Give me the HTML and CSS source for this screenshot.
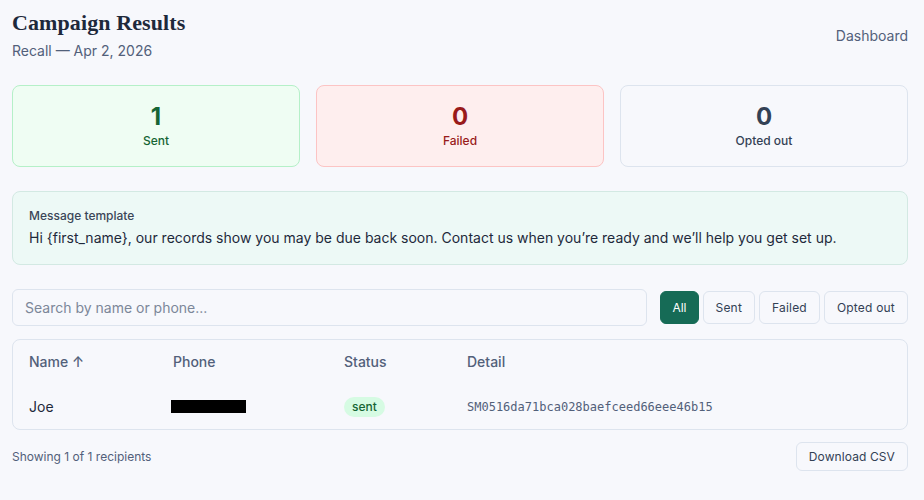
FILE: index.html
```html
<!DOCTYPE html>
<html lang="en">
<head>
<meta charset="utf-8">
<title>Campaign Results</title>
<link rel="stylesheet" href="styles.css">
</head>
<body>
<main class="page">
  <header class="header">
    <div class="titles">
      <h1 class="title">Campaign Results</h1>
      <p class="subtitle">Recall — Apr 2, 2026</p>
    </div>
    <a class="nav-link" href="#">Dashboard</a>
  </header>

  <section class="stats">
    <div class="stat stat-sent">
      <div class="stat-num">1</div>
      <div class="stat-label">Sent</div>
    </div>
    <div class="stat stat-failed">
      <div class="stat-num">0</div>
      <div class="stat-label">Failed</div>
    </div>
    <div class="stat stat-opted">
      <div class="stat-num">0</div>
      <div class="stat-label">Opted out</div>
    </div>
  </section>

  <section class="template">
    <div class="template-label">Message template</div>
    <div class="template-text">Hi {first_name}, our records show you may be due back soon. Contact us when you’re ready and we’ll help you get set up.</div>
  </section>

  <section class="filters">
    <input class="search" type="text" placeholder="Search by name or phone...">
    <div class="filter-buttons">
      <button class="btn btn-active">All</button>
      <button class="btn">Sent</button>
      <button class="btn">Failed</button>
      <button class="btn">Opted out</button>
    </div>
  </section>

  <section class="table-wrap">
    <table class="table">
      <colgroup>
        <col class="c-name"><col class="c-phone"><col class="c-status"><col>
      </colgroup>
      <thead>
        <tr><th>Name ↑</th><th>Phone</th><th>Status</th><th>Detail</th></tr>
      </thead>
      <tbody>
        <tr>
          <td>Joe</td>
          <td><span class="redacted"></span></td>
          <td><span class="pill">sent</span></td>
          <td class="mono">SM0516da71bca028baefceed66eee46b15</td>
        </tr>
      </tbody>
    </table>
  </section>

  <footer class="footer">
    <span class="count">Showing 1 of 1 recipients</span>
    <button class="btn btn-download">Download CSV</button>
  </footer>
</main>
</body>
</html>
```

FILE: styles.css
```css
* { box-sizing: border-box; }
html, body { margin: 0; padding: 0; }
body {
  background: #f7f8fc;
  font-family: Inter, "Noto Sans", sans-serif;
  color: #1e293b;
}
.page {
  padding: 9px 16px 20px 12px;
  display: flex;
  flex-direction: column;
}
.header {
  display: flex;
  justify-content: space-between;
  align-items: center;
}
.title {
  margin: 0;
  font-family: "Liberation Serif", "DejaVu Serif", serif;
  font-weight: 700;
  font-size: 22px;
  line-height: 28px;
  letter-spacing: 0.1px;
  color: #1e293b;
}
.subtitle {
  margin: 4px 0 0;
  font-size: 14px;
  line-height: 20px;
  color: #52607a;
}
.nav-link {
  font-size: 14px;
  color: #52607a;
  text-decoration: none;
}
.stats {
  margin-top: 24px;
  display: grid;
  grid-template-columns: repeat(3, 1fr);
  gap: 16px;
}
.stat {
  border: 1px solid #e2e8f0;
  border-radius: 8px;
  padding: 15px 16px 17px;
  text-align: center;
}
.stat-num {
  font-size: 24px;
  line-height: 32px;
  font-weight: 700;
}
.stat-label {
  font-size: 12px;
  line-height: 16px;
  font-weight: 500;
}
.stat-sent { background: #effdf3; border-color: #b5f0c8; color: #166534; }
.stat-failed { background: #feeeee; border-color: #fcc4c4; color: #991b1b; }
.stat-opted { background: #f7f8fc; border-color: #dde4ee; color: #334155; }

.template {
  margin-top: 24px;
  background: #edf9f6;
  border: 1px solid #d3e9e3;
  border-radius: 8px;
  padding: 16px;
}
.template-label {
  font-size: 12px;
  line-height: 16px;
  font-weight: 500;
  color: #3b4658;
}
.template-text {
  margin-top: 4px;
  font-size: 14px;
  line-height: 20px;
  color: #1e293b;
}

.filters {
  margin-top: 24px;
  display: flex;
  align-items: center;
  gap: 13px;
}
.search {
  flex: 1;
  height: 37px;
  border: 1px solid #dde4ee;
  border-radius: 6px;
  background: #f7f8fc;
  padding: 0 12px;
  font-family: inherit;
  font-size: 14px;
  color: #1e293b;
  outline: none;
}
.search::placeholder { color: #7c8799; }
.filter-buttons {
  display: flex;
  gap: 4px;
}
.btn {
  font-family: inherit;
  font-size: 12px;
  line-height: 15px;
  padding: 8px 12px;
  border: 1px solid #dde4ee;
  border-radius: 6px;
  background: #f7f8fc;
  color: #334155;
  font-weight: 400;
  letter-spacing: 0.2px;
}
.btn-active {
  background: #166b56;
  border-color: #166b56;
  color: #ffffff;
  padding: 8px 11px;
  letter-spacing: 0;
}

.table-wrap {
  margin-top: 13px;
  border: 1px solid #dde4ee;
  border-radius: 8px;
}
.table {
  width: 100%;
  border-collapse: collapse;
  table-layout: fixed;
}
.c-name { width: 144px; }
.c-phone { width: 171px; }
.c-status { width: 123px; }
.table th {
  text-align: left;
  font-weight: 500;
  font-size: 14px;
  line-height: 20px;
  color: #52607a;
  padding: 12px 16px;
}
.table td {
  font-size: 14px;
  line-height: 20px;
  padding: 12px 16px;
  color: #1e293b;
  vertical-align: middle;
}
.redacted {
  display: block;
  width: 75px;
  height: 13px;
  background: #000;
  margin-left: -2px;
}
.pill {
  display: inline-block;
  background: #d6fbe3;
  color: #166534;
  font-size: 12px;
  line-height: 20px;
  padding: 0 8px;
  border-radius: 10px;
  font-weight: 500;
}
.mono {
  font-family: "DejaVu Sans Mono", "Liberation Mono", monospace;
  font-size: 12px !important;
  color: #52607a !important;
}

.footer {
  margin-top: 12px;
  display: flex;
  justify-content: space-between;
  align-items: center;
}
.count {
  font-size: 12px;
  color: #52607a;
}
.btn-download {
  line-height: 15px;
  padding: 6px 12px;
  color: #334155;
  letter-spacing: 0.1px;
}
```
